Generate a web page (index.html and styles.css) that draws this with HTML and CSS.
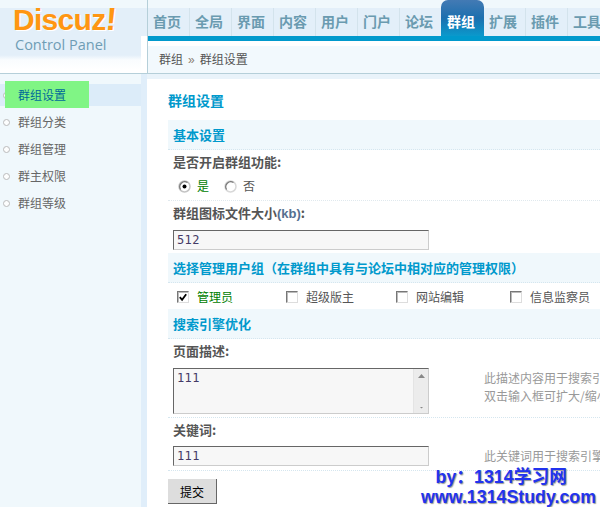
FILE: index.html
```html
<!DOCTYPE html>
<html lang="zh-CN">
<head>
<meta charset="utf-8">
<title>群组设置</title>
<link rel="stylesheet" href="styles.css">
</head>
<body>
<div class="app">
  <div class="logo">
    <div class="brand">Discuz<span class="bang">!</span></div>
    <div class="sub">Control Panel</div>
  </div>
  <header class="top">
    <nav class="nav">
      <a class="tab">首页</a><a class="tab">全局</a><a class="tab">界面</a><a class="tab">内容</a><a class="tab">用户</a><a class="tab">门户</a><a class="tab">论坛</a><a class="tab active">群组</a><a class="tab">扩展</a><a class="tab">插件</a><a class="tab">工具</a>
    </nav>
    <div class="bar"></div>
    <div class="crumb">群组<span class="sep">»</span>群组设置</div>
  </header>
  <aside class="side">
    <ul class="menu">
      <li class="item current"><span class="dot"></span><span class="mark"></span><span class="label">群组设置</span></li>
      <li class="item"><span class="dot"></span><span class="label">群组分类</span></li>
      <li class="item"><span class="dot"></span><span class="label">群组管理</span></li>
      <li class="item"><span class="dot"></span><span class="label">群主权限</span></li>
      <li class="item"><span class="dot"></span><span class="label">群组等级</span></li>
    </ul>
  </aside>
  <main class="main">
    <h1 class="title">群组设置</h1>

    <h2 class="head">基本设置</h2>
    <div class="field-label">是否开启群组功能:</div>
    <div class="row radios">
      <span class="opt on"><svg class="radio" width="13" height="13" viewBox="0 0 13 13"><circle cx="6.5" cy="6.5" r="5.5" fill="#fff" stroke="#c4c4c4" stroke-width="1.5"/><path d="M2.6 9.5A5 5 0 0 1 9.5 2.6" fill="none" stroke="#777" stroke-width="1.2"/><circle cx="6.5" cy="6.5" r="2" fill="#000"/></svg>是</span>
      <span class="opt"><svg class="radio" width="13" height="13" viewBox="0 0 13 13"><circle cx="6.5" cy="6.5" r="5.5" fill="#fff" stroke="#d8d8d8" stroke-width="1.5"/><path d="M2.6 9.5A5 5 0 0 1 9.5 2.6" fill="none" stroke="#777" stroke-width="1.2"/></svg>否</span>
    </div>
    <div class="field-label">群组图标文件大小<span class="latin">(kb)</span>:</div>
    <div class="row field"><div class="input">512</div></div>

    <h2 class="head second">选择管理用户组（在群组中具有与论坛中相对应的管理权限）</h2>
    <div class="checks">
      <span class="check on w1"><span class="box"><svg width="11" height="11" viewBox="0 0 11 11"><path d="M2 5l2.500 3L9 2" fill="none" stroke="#000" stroke-width="2"/></svg></span>管理员</span>
      <span class="check w2"><span class="box"></span>超级版主</span>
      <span class="check w3"><span class="box"></span>网站编辑</span>
      <span class="check"><span class="box"></span>信息监察员</span>
    </div>

    <h2 class="head">搜索引擎优化</h2>
    <div class="field-label">页面描述:</div>
    <div class="row area-row">
      <div class="input area">111
        <span class="scroll"><svg width="15" height="44" viewBox="0 0 15 44"><path d="M4 9l3.500-4L11 9z" fill="#888"/><path d="M6 38h3l-1.500 1.500z" fill="#888"/></svg></span>
      </div>
      <p class="hint">此描述内容用于搜索引擎优化<br>双击输入框可扩大/缩小</p>
    </div>
    <div class="field-label">关键词:</div>
    <div class="row keyword"><div class="input">111</div><p class="hint">此关键词用于搜索引擎优化</p></div>
    <button class="submit" type="button">提交</button>
  </main>
</div>
<div class="stamp"><div class="stamp-by">by：1314学习网</div><div class="stamp-url">www.1314Study.com</div></div>
</body>
</html>
```
FILE: styles.css
```css
* { box-sizing: border-box; }
html, body { margin: 0; padding: 0; height: 507px; overflow: hidden; background: #fff; }
body { position: relative; font: 12px/1.4 "Noto Sans CJK SC", "Liberation Sans", sans-serif; color: #555; }
.app { display: grid; grid-template-columns: 147px 453px; grid-template-rows: 74px 433px; height: 507px; }

.logo { position: relative; padding: 5px 0 0 13px; border-bottom: 1px solid #b5cfd9; background: linear-gradient(#f0f8fc 8px, #e3eff9 8px, #e3eff9 55px, #f9fcfe 60px, #fff 70px); }
.logo::after { content: ""; position: absolute; right: 0; top: 36px; bottom: 0; width: 6px; background: #fff; }
.brand { display: flex; align-items: flex-start; font: bold 30px/30px "Liberation Sans", sans-serif; letter-spacing: -.7px; color: #ff9612; text-shadow: 1px 1px 0 #fff; }
.bang { margin: 0; font-size: 32px; line-height: 28px; transform: skewX(-5deg); }
.sub { margin: 1px 0 0 2px; font: 14.500px/18px "Open Sans", sans-serif; color: #6f9db5; }

.top { border-bottom: 1px solid #b5cfd9; border-left: 1px solid #b5cfd9; overflow: hidden; }
.nav { display: flex; align-items: flex-end; height: 36px; white-space: nowrap; background: linear-gradient(#f0f8fc 8px, #e3eff9 8px); }
.tab { flex: none; width: 42px; height: 28px; padding-left: 5px; font: bold 14px/27px "Noto Sans CJK SC", sans-serif; color: #6a9bb0; border-right: 1px solid #d3e3ec; }
.tab.active { height: 36px; padding: 8px 0 0 6px; margin-left: -1px; width: 43px; color: #fff; border: 0; border-radius: 7px 7px 0 0; background: linear-gradient(#437ab4, #1c6fae 50%, #0a99cc); }
.bar { height: 5px; background: #0099cc; }
.crumb { height: 32px; margin-top: 5px; padding: 0 0 0 11px; line-height: 26px; background: #f2f9fd; color: #555; }
.sep { margin: 0 5px; color: #8a7f72; font-family: "Liberation Sans", sans-serif; }

.side { background: #e0eefa; padding-right: 6px; }
.menu { margin: 0; padding: 5px 0 0; min-height: 100%; list-style: none; background: #f0f8fc; }
.item { position: relative; display: flex; align-items: center; height: 27px; padding-left: 3px; color: #666; }
.item.current { height: 22px; margin-top: 5px; margin-bottom: 3px; background: #dcecf9; color: #006a99; }
.mark { position: absolute; left: 5px; top: -3px; width: 84px; height: 27px; background: #80f585; }
.dot { position: relative; width: 7px; height: 7px; margin-right: 8px; border: 1px solid #b4b4b4; border-radius: 50%; background: #fff; opacity: .9; }
.label { position: relative; }

.main { padding: 0 0 0 21px; background: linear-gradient(#e9f3fa 5px, #fff 5px); overflow: hidden; white-space: nowrap; }
.title { margin: 0; height: 46px; padding-top: 16px; font: bold 14px/20px "Noto Sans CJK SC", sans-serif; color: #0099cc; }
.head { margin: 0; height: 30px; padding: 0 0 0 5px; font: bold 13px/29px "Noto Sans CJK SC", sans-serif; color: #0099cc; background: #f0f8fc; border-bottom: 1px dotted #d5e6ef; }
.head.second { margin-top: 3px; }
.field-label { padding-left: 5px; font: bold 13px/24px "Noto Sans CJK SC", sans-serif; color: #555; height: 24px; }
.latin { color: #556f90; font-family: "Liberation Sans", sans-serif; }
.row { display: flex; padding-left: 5px; }
.radios { align-items: center; height: 27px; padding-left: 10px; padding-bottom: 1px; border-bottom: 1px dotted #e0e9ee; }
.opt { display: flex; align-items: center; width: 46px; color: #555; font-size: 12px; }
.opt.on { color: #008000; }
.radio { margin-right: 6px; }
.field { height: 25px; padding-top: 5px; }
.input { position: relative; flex: none; width: 256px; height: 20px; padding-left: 3px; font: 12px/19px "DejaVu Sans Mono", monospace; letter-spacing: .4px; color: #443a66; background: #f7f7f7; border: 1px solid; border-color: #666 #ccc #ccc #666; }
.checks { display: flex; align-items: center; height: 26px; padding: 3px 0 0 9px; }
.check { display: flex; align-items: center; gap: 8px; color: #555; }
.check.on { color: #008000; }
.w1 { width: 109px; } .w2 { width: 110px; } .w3 { width: 114px; }
.box { display: flex; align-items: center; justify-content: center; width: 12px; height: 12px; border: 1px solid; border-color: #777 #ddd #ddd #777; background: #fff; box-shadow: inset 1px 1px 0 #bbb; }
.area-row { height: 55px; padding-top: 5px; border-bottom: 1px dotted #d5e6ef; }
.area { height: 46px; }
.scroll { position: absolute; right: 0; top: 0; width: 15px; height: 44px; background: #ececec; border-left: 1px solid #e4e4e4; }
.scroll svg { display: block; }
.hint { margin: 1px 0 0 55px; font-size: 12px; line-height: 18px; color: #999; }
.keyword { height: 29px; padding-top: 4px; border-bottom: 1px dotted #d5e6ef; }
.submit { display: block; width: 49px; height: 25px; margin-top: 8px; padding: 0; font: 12px "Noto Sans CJK SC", sans-serif; color: #000; background: #ddd; border: 0; border-right: 1px solid #666; border-bottom: 1px solid #666; }

.stamp { position: absolute; right: 4px; top: 467px; text-align: right; font: bold 17.800px/20px "Liberation Sans", "Noto Sans CJK SC", sans-serif; color: #2233ee; text-shadow: 1px 1px 1px #999; white-space: nowrap; }
.stamp-by { margin-right: 29px; }
```
